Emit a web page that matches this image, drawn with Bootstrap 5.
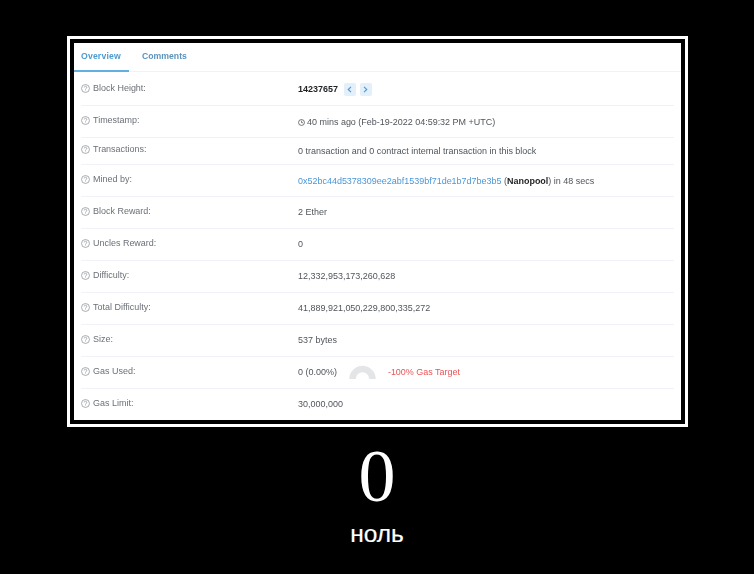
<!DOCTYPE html>
<html lang="ru">
<head>
<meta charset="utf-8">
<title>0 — ноль</title>
<link href="https://cdn.jsdelivr.net/npm/bootstrap@5.3.0/dist/css/bootstrap.min.css" rel="stylesheet">
<style>
html,body{height:100%;background:#000;}
body{width:754px;height:574px;overflow:hidden;font-family:"Liberation Sans",Arial,sans-serif;}
.frame-outer{margin:36px 0 0 67px;width:621px;height:391px;border:3px solid #fff;padding:4px;background:#000;}
.sheet{background:#fff;height:377px;width:607px;filter:blur(.55px);color:#50555b;font-size:8.98px;}
.tabbar{height:29px;border-bottom:1px solid #f0f2f5;}
.tab-item{display:block;height:29px;line-height:26px;font-size:8.7px;font-weight:700;color:#5a93bd;text-decoration:none;padding:0 7px;}
.tab-item.on{color:#4f9bd0;border-bottom:2px solid #63aee3;width:55px;margin-right:6px;letter-spacing:.15px;}
.data-row{margin:0 7px;border-bottom:1px solid #f0f2f7;height:32px;}
.data-row.r-first{height:34px}
.data-row.r-short{height:27px}
.data-row.r-last{height:31px;border-bottom:0}
.lbl{width:217px;flex:none;padding-bottom:1px;color:#6b7077;}
.lbl-low{padding-bottom:0;padding-top:1px}
.lbl-short{padding-bottom:2px}
.lbl svg{margin-right:3px;vertical-align:-1.5px}
.val-low{padding-top:2px}
.pager{width:12px;height:13px;background:#e3eff9;border-radius:2px;}
.num-gap{margin-right:6px}
.hash{color:#4b96d6;text-decoration:none}
.bold-dark{color:#1e2022;font-weight:700}
.over{color:#ea5455}
.clock{vertical-align:-1px;margin-right:2px}
.gauge{margin:0 12px 3px 12px}
.caption{color:#fff;text-align:center;}
.big-num{font-family:"Liberation Serif",serif;font-size:74px;line-height:74px;margin-top:12px;}
.sub-word{font-size:24.5px;line-height:28px;font-weight:400;-webkit-text-stroke:.2px #fff;margin-top:7px;}
</style>
</head>
<body>
<svg class="d-none"><symbol id="qmark" viewBox="0 0 10 10"><circle cx="5" cy="5" r="4.4" fill="none" stroke="#8a8f95" stroke-width=".8"/><path d="M3.6 3.9a1.4 1.4 0 1 1 2.2 1.1c-.5.4-.8.6-.8 1.2M5 7.3v.6" fill="none" stroke="#8a8f95" stroke-width=".8"/></symbol></svg>
<div class="frame-outer">
  <div class="sheet">
    <div class="tabbar d-flex">
      <a class="tab-item on" href="#">Overview</a>
      <a class="tab-item" href="#">Comments</a>
    </div>
    <div class="data-row r-first d-flex align-items-center">
      <div class="lbl lbl-low"><svg width="9" height="9"><use href="#qmark"/></svg>Block Height:</div>
      <div class="val-low d-flex align-items-center"><span class="bold-dark num-gap">14237657</span>
        <span class="pager d-flex align-items-center justify-content-center me-1"><svg width="5" height="7" viewBox="0 0 5 7"><path d="M4 .8 1.2 3.5 4 6.2" fill="none" stroke="#4b96d6" stroke-width="1.1"/></svg></span>
        <span class="pager d-flex align-items-center justify-content-center"><svg width="5" height="7" viewBox="0 0 5 7"><path d="M1 .8 3.8 3.5 1 6.2" fill="none" stroke="#4b96d6" stroke-width="1.1"/></svg></span>
      </div>
    </div>
    <div class="data-row d-flex align-items-center">
      <div class="lbl"><svg width="9" height="9"><use href="#qmark"/></svg>Timestamp:</div>
      <div class="val-low"><svg class="clock" width="7" height="7" viewBox="0 0 10 10"><circle cx="5" cy="5" r="4.2" fill="none" stroke="#4a4f55" stroke-width="1.1"/><path d="M5 2.4V5.3H7.2" fill="none" stroke="#4a4f55" stroke-width="1"/></svg>40 mins ago (Feb-19-2022 04:59:32 PM +UTC)</div>
    </div>
    <div class="data-row r-short d-flex align-items-center">
      <div class="lbl lbl-short"><svg width="9" height="9"><use href="#qmark"/></svg>Transactions:</div>
      <div class="val-low">0 transaction and 0 contract internal transaction in this block</div>
    </div>
    <div class="data-row d-flex align-items-center">
      <div class="lbl"><svg width="9" height="9"><use href="#qmark"/></svg>Mined by:</div>
      <div class="val-low"><a class="hash" href="#">0x52bc44d5378309ee2abf1539bf71de1b7d7be3b5</a> (<span class="bold-dark">Nanopool</span>) in 48 secs</div>
    </div>
    <div class="data-row d-flex align-items-center">
      <div class="lbl"><svg width="9" height="9"><use href="#qmark"/></svg>Block Reward:</div>
      <div>2 Ether</div>
    </div>
    <div class="data-row d-flex align-items-center">
      <div class="lbl"><svg width="9" height="9"><use href="#qmark"/></svg>Uncles Reward:</div>
      <div>0</div>
    </div>
    <div class="data-row d-flex align-items-center">
      <div class="lbl"><svg width="9" height="9"><use href="#qmark"/></svg>Difficulty:</div>
      <div>12,332,953,173,260,628</div>
    </div>
    <div class="data-row d-flex align-items-center">
      <div class="lbl"><svg width="9" height="9"><use href="#qmark"/></svg>Total Difficulty:</div>
      <div>41,889,921,050,229,800,335,272</div>
    </div>
    <div class="data-row d-flex align-items-center">
      <div class="lbl"><svg width="9" height="9"><use href="#qmark"/></svg>Size:</div>
      <div>537 bytes</div>
    </div>
    <div class="data-row d-flex align-items-center">
      <div class="lbl"><svg width="9" height="9"><use href="#qmark"/></svg>Gas Used:</div>
      <div class="d-flex align-items-center"><span>0 (0.00%)</span>
        <svg class="gauge" width="27" height="15" viewBox="0 0 27 15"><path d="M3.5 15a10 10 0 0 1 20 0" fill="none" stroke="#e4e5e7" stroke-width="6.5"/></svg>
        <span class="over">-100% Gas Target</span></div>
    </div>
    <div class="data-row r-last d-flex align-items-center">
      <div class="lbl"><svg width="9" height="9"><use href="#qmark"/></svg>Gas Limit:</div>
      <div>30,000,000</div>
    </div>
  </div>
</div>
<div class="caption">
  <div class="big-num">0</div>
  <div class="sub-word">ноль</div>
</div>
<script src="https://cdn.jsdelivr.net/npm/bootstrap@5.3.0/dist/js/bootstrap.bundle.min.js"></script>
</body>
</html>
